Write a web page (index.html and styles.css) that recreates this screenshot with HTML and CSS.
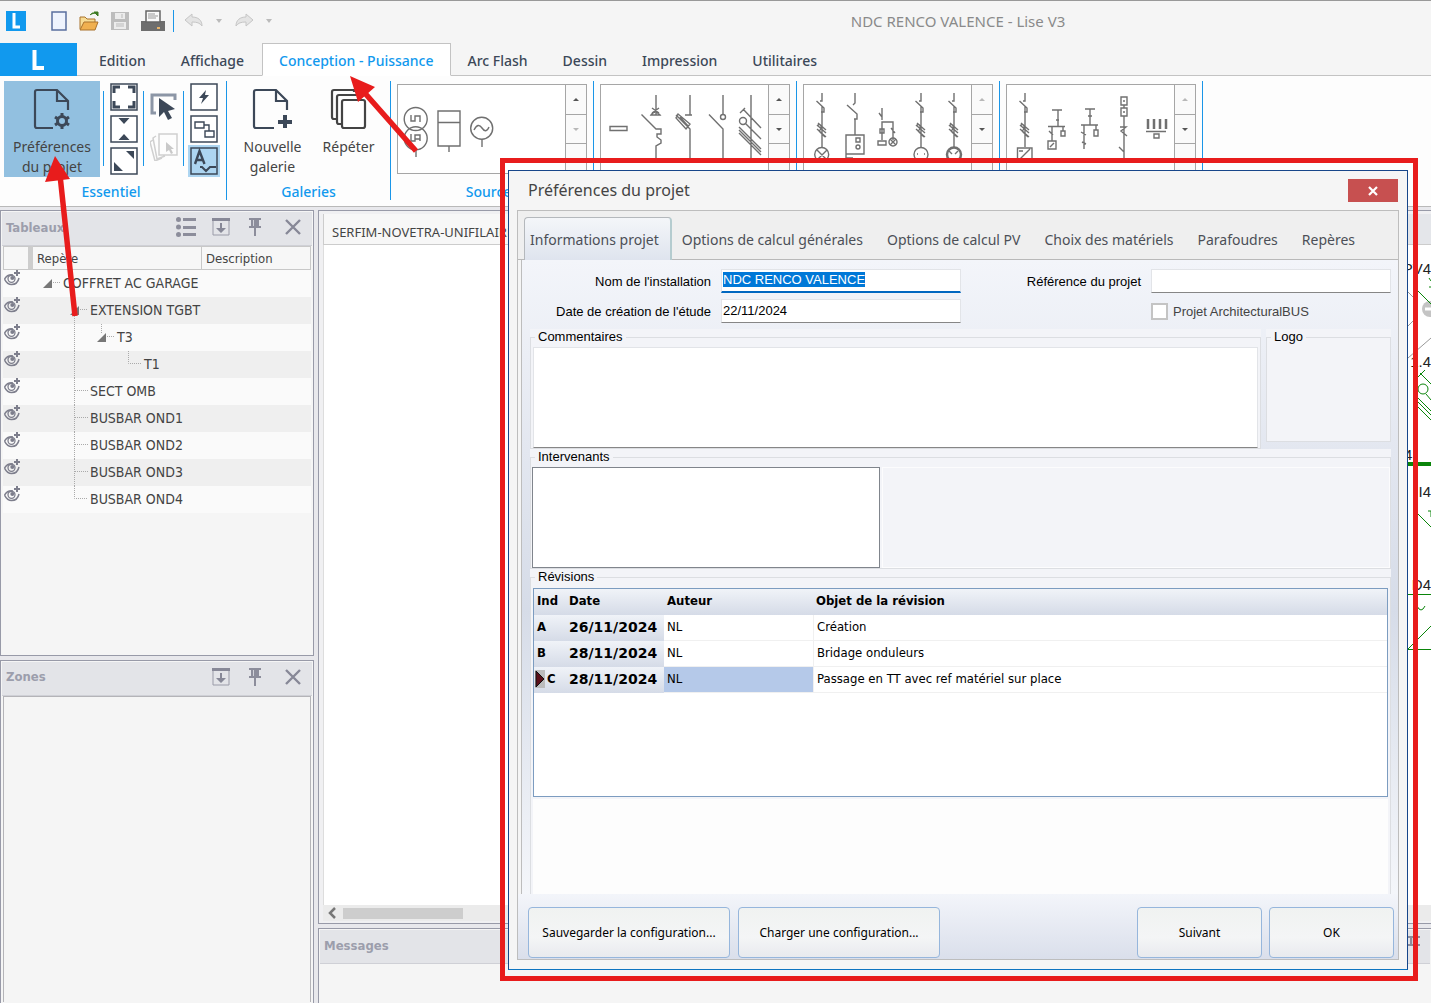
FILE: index.html
```html
<!DOCTYPE html>
<html lang="fr">
<head>
<meta charset="utf-8">
<title>NDC RENCO VALENCE - Lise V3</title>
<link rel="stylesheet" href="styles.css">
</head>
<body>
<svg class="defs" aria-hidden="true">
  <defs>
    <symbol id="ic-dock" viewBox="0 0 18 18"><path d="M1 1h16v16H1z" fill="none" stroke="#9a9ba8"/><path d="M0 0h18v3H0zM8 5h2v5h4l-5 5-5-5h4z" fill="#878897"/></symbol>
    <symbol id="ic-pin" viewBox="0 0 12 18"><path d="M0 0h12v2h-2v6h2v2H7v8H5v-8H0V8h2V2H0z" fill="#8c8d9b"/><path d="M4 2h1v6H4z" fill="#d0d1d8"/></symbol>
    <symbol id="ic-x" viewBox="0 0 18 18"><path d="M2 2l14 14M16 2L2 16" stroke="#878897" stroke-width="2.400" fill="none"/></symbol>
    <symbol id="ic-list" viewBox="0 0 20 20"><g fill="#8c8d9b"><circle cx="2.500" cy="2.500" r="2.500"/><circle cx="2.500" cy="10" r="2.500"/><circle cx="2.500" cy="17.500" r="2.500"/><path d="M7 1h13v3H7zM7 9h13v3H7zM7 16h13v3H7z"/></g></symbol>
    <symbol id="ic-eye" viewBox="0 0 16 16"><path d="M.5 9C3 5 6 4.500 9 5M.5 9c2 4 4 5.500 7 5.500S14 12.500 15 8" fill="none" stroke="#7d7e8c" stroke-width="1.500"/><circle cx="7.500" cy="8.800" r="3.500" fill="none" stroke="#7d7e8c" stroke-width="1.300"/><circle cx="8.300" cy="8" r="2" fill="#7d7e8c"/><path d="M12 0h2v2h2v2h-2v2h-2V4h-2V2h2z" fill="#7d7e8c"/></symbol>
    <symbol id="ic-feed" viewBox="-8 93 16 56" overflow="visible"><path d="M0 93v8h-2M-5.500 101l7.500 7v4H-1M0 106v41M-5 125l9 8M-5 129l9 8M-4 123l8 7M-5 126q3-3 4 0t-2 5M-3 131l6 6" fill="none" stroke="#707070" stroke-width="1.400"/></symbol>
  </defs>
</svg>

<div class="app">
  <header class="titlebar">
    <svg class="applogo" viewBox="0 0 20 20"><path d="M0 0h20v20H0z" fill="#1199ee"/><path d="M8 2v14h6" fill="none" stroke="#fff" stroke-width="3"/></svg>
    <div class="quick">
      <button type="button" aria-label="Nouveau"><svg width="16" height="20" viewBox="0 0 16 20"><path d="M1 1h14v18H1z" fill="#eef3fd" stroke="#5a6f9f" stroke-width="1.500"/></svg></button>
      <button type="button" aria-label="Ouvrir"><svg width="20" height="20" viewBox="0 0 20 20"><path d="M1 18V6h5l2 2h8v3" fill="#f7dc95" stroke="#a9722c"/><path d="M1 19l4-8h14l-3 8z" fill="#f0b050" stroke="#a9722c"/><path d="M11 4q2-3 6-2M15 1h4v4z" fill="#3d7a22" stroke="#3d7a22"/></svg></button>
      <button type="button" aria-label="Enregistrer" disabled><svg width="18" height="18" viewBox="0 0 18 18"><path d="M0 0h18v18H0z" fill="#bdbdbd"/><path d="M4 1h10v6H4zM3 10h12v7H3z" fill="#ececec"/><path d="M5 12h8M5 14h8M11 2v4" stroke="#bbb"/></svg></button>
      <button type="button" aria-label="Imprimer"><svg width="24" height="22" viewBox="0 0 24 22"><path d="M0 11h24v10H0z" fill="#6e6e6e"/><path d="M5 1h14v11H5z" fill="#fafafa" stroke="#666" stroke-width="1.500"/><path d="M7 4h7M7 6h10M7 8h8" stroke="#999"/><path d="M16 17h3v2h-3z" fill="#e7b36a"/></svg></button>
      <span class="bluebar"></span>
      <button type="button" aria-label="Annuler" disabled><svg width="20" height="16" viewBox="0 0 20 16"><path d="M1 7l7-6v3c6 0 10 3 10 9-2-3-5-4-10-4v4z" fill="#e4e4e4" stroke="#c6c6c6"/></svg></button>
      <span class="drop"></span>
      <button type="button" aria-label="Rétablir" disabled><svg width="20" height="16" viewBox="0 0 20 16"><path d="M19 7l-7-6v3C6 4 2 7 2 13c2-3 5-4 10-4v4z" fill="#e4e4e4" stroke="#c6c6c6"/></svg></button>
      <span class="drop"></span>
    </div>
    <h1>NDC RENCO VALENCE - Lise V3</h1>
  </header>

  <nav class="tabs">
    <a class="home" href="#" aria-label="Menu Lise"><svg width="14" height="22" viewBox="0 0 14 22"><path d="M2.500 0v18H12" fill="none" stroke="#fff" stroke-width="4"/></svg></a>
    <a href="#">Edition</a>
    <a href="#">Affichage</a>
    <a href="#" class="on">Conception - Puissance</a>
    <a href="#">Arc Flash</a>
    <a href="#">Dessin</a>
    <a href="#">Impression</a>
    <a href="#">Utilitaires</a>
    <span class="rest"></span>
  </nav>

  <section class="ribbon">
    <div class="group essential">
      <div class="tools">
        <button type="button" class="big pressed"><svg width="38" height="44" viewBox="0 0 38 44"><path d="M20 41H4q-2 0-2-2V5q0-2 2-2h20l11 11v9M24 3v11h11" fill="none" stroke="#3c4858" stroke-width="2.200"/><circle cx="29" cy="34" r="4.500" fill="none" stroke="#3c4858" stroke-width="3"/><path d="M29 26v3M29 39v3M22 30l3 2M33 36l3 2M22 38l3-2M33 32l3-2" stroke="#3c4858" stroke-width="3"/></svg><span>Préférences<br>du projet</span></button>
        <i class="short"></i>
        <div class="col">
          <button type="button" aria-label="Zoom étendu"><svg viewBox="0 0 28 28"><path d="M1 1h26v26H1z" fill="#fff" stroke="#3c4858" stroke-width="1.500"/><path d="M4 10V4h6M18 4h6v6M24 18v6h-6M10 24H4v-6" fill="none" stroke="#3c4858" stroke-width="3"/></svg></button>
          <button type="button" aria-label="Réduire"><svg viewBox="0 0 28 28"><path d="M1 1h26v26H1z" fill="#fff" stroke="#3c4858" stroke-width="1.500"/><path d="M8.500 3h11L14 9zM8.500 25h11L14 19z" fill="#3c4858"/></svg></button>
          <button type="button" aria-label="Agrandir"><svg viewBox="0 0 28 28"><path d="M1 1h26v26H1z" fill="#fff" stroke="#3c4858" stroke-width="1.500"/><path d="M16 4h8v8zM4 15v9h9z" fill="#3c4858"/></svg></button>
        </div>
        <i class="short"></i>
        <div class="col mid">
          <button type="button" aria-label="Sélection"><svg viewBox="0 0 28 28"><path d="M6 20H2V2h23v5" fill="none" stroke="#8c96a6" stroke-width="3"/><path d="M9 5v19l5-5 4 8 4-2-4-7 7-2z" fill="#3c4858"/></svg></button>
          <button type="button" aria-label="Sélection multiple" disabled><svg viewBox="0 0 28 28"><path d="M9 1h18v21H9zM6 3L3 5l4 21 8-3M3 7L0 9l5 19 7-3" fill="none" stroke="#d0d0d0" stroke-width="1.500"/><path d="M16 9v10l3-2 2 4 2-1-2-4h3z" fill="#c9c9c9"/></svg></button>
        </div>
        <i class="short"></i>
        <div class="col">
          <button type="button" aria-label="Calcul"><svg viewBox="0 0 28 28"><path d="M1 1h26v26H1z" fill="#fff" stroke="#3c4858" stroke-width="1.500"/><path d="M16 7l-7 8h4l-2 6 8-9h-4z" fill="#3c4858"/></svg></button>
          <button type="button" aria-label="Liaisons"><svg viewBox="0 0 28 28"><path d="M1 1h26v26H1z" fill="#fff" stroke="#3c4858" stroke-width="1.500"/><path d="M5 7h9v6H5zM14 10h5v6M15 16h9v6h-9z" fill="none" stroke="#3c4858" stroke-width="1.400"/></svg></button>
          <button type="button" class="lit" aria-label="Annotation"><svg viewBox="0 0 28 28"><path d="M1 1h26v26H1z" fill="none" stroke="#3c4858" stroke-width="1.500"/><path d="M5 17L9.500 4l5 13M6.500 13h6" fill="none" stroke="#3c4858" stroke-width="2.400"/><path d="M10 20h2l4 4 4-4h6" fill="none" stroke="#3c4858" stroke-width="2"/></svg></button>
        </div>
      </div>
      <h2>Essentiel</h2>
    </div>

    <div class="group gals">
      <div class="tools">
        <button type="button" class="big"><svg width="42" height="44" viewBox="0 0 42 44"><path d="M22 41H4q-2 0-2-2V5q0-2 2-2h20l11 11v9M24 3v11h11" fill="none" stroke="#3c4858" stroke-width="2.200"/><path d="M33 28v13M26 35h14" stroke="#3c4858" stroke-width="4"/></svg><span>Nouvelle<br>galerie</span></button>
        <button type="button" class="big"><svg width="38" height="44" viewBox="0 0 38 44"><path d="M6 32H4q-2 0-2-2V5q0-2 2-2h20v2M11 37H9q-2 0-2-2V10q0-2 2-2h20v2" fill="none" stroke="#444" stroke-width="2.200"/><rect x="12" y="13" width="23" height="28" rx="2" fill="#fff" stroke="#444" stroke-width="2.200"/></svg><span>Répéter</span></button>
      </div>
      <h2>Galeries</h2>
    </div>

    <div class="group gallery">
      <div class="box">
        <svg viewBox="398 85 167 88"><g class="ln"><circle cx="415.700" cy="119" r="11.500"/><circle cx="415.700" cy="138.300" r="11.500"/><path d="M416 150v7M411 115v6h4v-5h5v6M411 134v7h4v-6h5v6M415 139h5M438 111h22v35h-22zM438 122.500h22M449 146v6M482 139v8"/><circle cx="481.700" cy="128.300" r="11"/><path d="M474 130q4-8 8-2t7-1"/></g></svg>
        <div class="spin"><span class="up"></span><span class="down dim"></span><span class="more"></span></div>
      </div>
      <h2>Sources</h2>
    </div>
    <div class="group gallery">
      <div class="box">
        <svg viewBox="601 85 167 88"><g class="ln"><path d="M610 126.500h17v4h-17zM656 95v20M652 108l7 5M659 108l-7 5M651 115q4-6 9 0zM641.500 114.500L656 129h5v5h-4v3l4 3v3l-5 3v16M690 95v20M685 115h7M676 115l14 14v33M678 114l12 10-4 5-10-11zM680 117l8 9M723 95v20M709 114.500L723 129v33M751 95v67M743 109l18 19M740 113l5-5M745 123l16 16M739 127l22 22M739 130l22 22M739 133l22 22"/><circle cx="723" cy="117" r="2.500"/><circle cx="743" cy="121" r="3.500"/></g></svg>
        <div class="spin"><span class="up"></span><span class="down"></span><span class="more"></span></div>
      </div>
    </div>
    <div class="group gallery">
      <div class="box">
        <svg viewBox="804 85 167 88"><use href="#ic-feed" x="814" y="93" width="16" height="56"/><use href="#ic-feed" x="913" y="93" width="16" height="56"/><use href="#ic-feed" x="946" y="93" width="16" height="56"/><g class="ln"><circle cx="821.700" cy="154.500" r="7"/><path d="M817 150l10 10M827 150l-10 10M855 93v10l-2 2M847 105l10 9v5h-3M855 119v16M846 135h18v19h-18zM856 138h4v4h-4zM846 154v4h7M882 108v12M879 113l3 4M882 140v-18h11v18M878 141h8v4h-8zM880 129h4v4h-4zM891 128l4 5M890 139l6 6M896 139l-6 6M917 154h1M924 154h1M949 151l3 3M958 151l-3 3M950 159h2M956 159h2"/><circle cx="858" cy="147" r="2"/><circle cx="893" cy="142" r="4"/><circle cx="921" cy="154.500" r="7"/><circle cx="954" cy="154.500" r="7" stroke-width="2.500"/></g></svg>
        <div class="spin"><span class="up dim"></span><span class="down"></span><span class="more"></span></div>
      </div>
    </div>
    <div class="group gallery">
      <div class="box">
        <svg viewBox="1007 85 167 88"><use href="#ic-feed" x="1017" y="93" width="16" height="56"/><g class="ln"><path d="M1017.500 148h14.500v14h-14.500zM1020 159l10-10M1019 151h4M1052 110h10M1058 110v16M1056 120h3M1048 126.500h17M1052 126v15M1049 131l4 4M1048 141h8v8h-8zM1050 147l4-4M1063 126v5M1061 131h4v5h-4zM1085 109h10M1090 109v16M1088 116h4M1081 125h17M1084 125v24M1081 132l5 3M1082 142l4 2M1096 125v5M1094 130h4v6h-4zM1121 97h6v8h-6zM1121 108h6v8h-6zM1124 105v3M1124 116v46M1120 127h6l-5 4 6 5M1119 147l5 5M1123 101h2M1123 112h2M1146 131.500h20M1154 134h5v4h-5z"/><path d="M1148 119v10M1154 119v10M1160 119v10M1166 119v10" stroke-width="2.500"/></g></svg>
        <div class="spin"><span class="up dim"></span><span class="down"></span><span class="more"></span></div>
      </div>
    </div>
  </section>

  <main class="work">
    <aside class="dock">
      <section class="panel boards">
        <header><h3>Tableaux</h3><svg width="20" height="20"><use href="#ic-list"/></svg><svg width="18" height="18"><use href="#ic-dock"/></svg><svg width="12" height="18"><use href="#ic-pin"/></svg><svg width="18" height="18"><use href="#ic-x"/></svg></header>
        <table class="tree">
          <thead><tr><th class="c1"></th><th class="c2">Repère</th><th>Description</th></tr></thead>
          <tbody>
            <tr><td><svg width="16" height="16"><use href="#ic-eye"/></svg></td><td><span><svg width="30" height="27" viewBox="33 0 30 27"><path d="M52 9v9h-9z" fill="#777"/><path class="dot" d="M53 12.500h8"/></svg>COFFRET AC GARAGE</span></td><td></td></tr>
            <tr><td><svg width="16" height="16"><use href="#ic-eye"/></svg></td><td><span><svg width="57" height="27" viewBox="33 0 57 27"><path d="M79 9v9h-9z" fill="#777"/><path class="dot" d="M80 12.500h8M74.500 17v10"/></svg>EXTENSION TGBT</span></td><td></td></tr>
            <tr><td><svg width="16" height="16"><use href="#ic-eye"/></svg></td><td><span><svg width="84" height="27" viewBox="33 0 84 27"><path d="M106 9v9h-9z" fill="#777"/><path class="dot" d="M107 12.500h8M101.500 0v9M74.500 0v27"/></svg>T3</span></td><td></td></tr>
            <tr><td><svg width="16" height="16"><use href="#ic-eye"/></svg></td><td><span><svg width="111" height="27" viewBox="33 0 111 27"><path class="dot" d="M128.500 0v12.500h13M74.500 0v27"/></svg>T1</span></td><td></td></tr>
            <tr><td><svg width="16" height="16"><use href="#ic-eye"/></svg></td><td><span><svg width="57" height="27" viewBox="33 0 57 27"><path class="dot" d="M74.500 0v27M75 12.500h13"/></svg>SECT OMB</span></td><td></td></tr>
            <tr><td><svg width="16" height="16"><use href="#ic-eye"/></svg></td><td><span><svg width="57" height="27" viewBox="33 0 57 27"><path class="dot" d="M74.500 0v27M75 12.500h13"/></svg>BUSBAR OND1</span></td><td></td></tr>
            <tr><td><svg width="16" height="16"><use href="#ic-eye"/></svg></td><td><span><svg width="57" height="27" viewBox="33 0 57 27"><path class="dot" d="M74.500 0v27M75 12.500h13"/></svg>BUSBAR OND2</span></td><td></td></tr>
            <tr><td><svg width="16" height="16"><use href="#ic-eye"/></svg></td><td><span><svg width="57" height="27" viewBox="33 0 57 27"><path class="dot" d="M74.500 0v27M75 12.500h13"/></svg>BUSBAR OND3</span></td><td></td></tr>
            <tr><td><svg width="16" height="16"><use href="#ic-eye"/></svg></td><td><span><svg width="57" height="27" viewBox="33 0 57 27"><path class="dot" d="M74.500 0v12.500h13"/></svg>BUSBAR OND4</span></td><td></td></tr>
          </tbody>
        </table>
      </section>
      <section class="panel zones">
        <header><h3>Zones</h3><svg width="18" height="18"><use href="#ic-dock"/></svg><svg width="12" height="18"><use href="#ic-pin"/></svg><svg width="18" height="18"><use href="#ic-x"/></svg></header>
        <div class="empty"></div>
      </section>
    </aside>
    <div class="center">
      <section class="doc">
        <div class="doctab"><span>SERFIM-NOVETRA-UNIFILAIRE</span></div>
        <div class="sheet">
          <svg width="30" height="440" viewBox="1401 245 30 440"><g font-family="Liberation Sans, sans-serif" font-size="15" fill="#222"><text x="1431" y="274" text-anchor="end">PV4</text><text x="1431" y="367" text-anchor="end">1.4</text><text x="1404" y="460">4</text><text x="1431" y="497" text-anchor="end">I4</text><text x="1431" y="590" text-anchor="end">D4</text></g><circle cx="1430" cy="309" r="8" fill="#c4c4c4"/><path d="M1425 309h6" stroke="#fff" stroke-width="3"/><path d="M1408 292l6 6M1408 326l6-6M1408 358l23-20" fill="none" stroke="#999"/><g fill="none" stroke="#0a850a"><path d="M1417 290l14 14M1429 278l2 3M1429 287h2M1417 378l8-8M1420 373l11 11M1426 394l5 6M1417 397l14 14M1417 401l14 14M1417 406l14 14M1417 513l14 14M1428 511h3v6M1408 594.500h23M1417 606q4 8 8 0M1408 649l23-23M1408 649.500h23"/><circle cx="1423" cy="389" r="5"/><path d="M1408 464h23" stroke-width="4"/></g></svg>
        </div>
        <div class="hbar"><svg width="10" height="12" viewBox="0 0 10 12"><path d="M8 1L3 6l5 5" fill="none" stroke="#777" stroke-width="2.500"/></svg><span></span></div>
      </section>
      <section class="panel messages"><header><h3>Messages</h3><svg width="12" height="18"><use href="#ic-pin"/></svg></header></section>
    </div>
  </main>

  <div class="frame">
    <form class="dialog" role="dialog" aria-labelledby="dlg">
      <header><h2 id="dlg">Préférences du projet</h2><button type="button" class="close" aria-label="Fermer"><svg width="12" height="10" viewBox="0 0 12 10"><path d="M2 1l8 8M10 1L2 9" stroke="#fff" stroke-width="2.200"/></svg></button></header>
      <div class="inner">
        <nav class="dtabs"><a href="#" class="on">Informations projet</a><a href="#">Options de calcul générales</a><a href="#">Options de calcul PV</a><a href="#">Choix des matériels</a><a href="#">Parafoudres</a><a href="#">Repères</a></nav>
        <div class="page">
          <div class="fields">
            <label for="nom">Nom de l'installation</label><input id="nom" type="text" value="NDC RENCO VALENCE" autofocus>
            <label for="ref">Référence du projet</label><input id="ref" type="text">
            <label for="date">Date de création de l'étude</label><input id="date" type="text" value="22/11/2024">
            <span class="check"><input id="bus" type="checkbox"><label for="bus">Projet ArchitecturalBUS</label></span>
          </div>
          <div class="two">
            <div class="gb notes"><label for="com">Commentaires</label><textarea id="com"></textarea></div>
            <div class="gb logo"><span>Logo</span></div>
          </div>
          <div class="gb people"><label for="int">Intervenants</label><div><textarea id="int"></textarea><span></span></div></div>
          <div class="gb revs"><span>Révisions</span>
            <div class="grid">
              <table>
                <thead><tr><th class="i">Ind</th><th class="d">Date</th><th class="a">Auteur</th><th>Objet de la révision</th></tr></thead>
                <tbody>
                  <tr><th>A</th><th class="day">26/11/2024</th><td>NL</td><td>Création</td></tr>
                  <tr><th>B</th><th class="day">28/11/2024</th><td>NL</td><td>Bridage onduleurs</td></tr>
                  <tr><th class="cur"><svg width="10" height="18" viewBox="0 0 10 18"><path d="M0 0h10v18H0z" fill="#bcbcbc"/><path d="M1 1l8 8-8 8z" fill="#5a0f18" stroke="#111"/></svg>C</th><th class="day">28/11/2024</th><td class="sel">NL</td><td>Passage en TT avec ref matériel sur place</td></tr>
                </tbody>
              </table>
            </div>
            <div class="blank"></div>
          </div>
        </div>
        <footer><button type="button" class="wide">Sauvegarder la configuration...</button><button type="button" class="wide">Charger une configuration...</button><i></i><button type="button">Suivant</button><button type="submit">OK</button></footer>
      </div>
    </form>
  </div>
  <svg class="arrows" width="430" height="330" viewBox="0 0 430 330"><path d="M60 175L75 316M363 91l53 60" stroke="#e81c1c" stroke-width="5.500"/><path d="M55 156l15 23-25 3zM350 76l25 11-17 15z" fill="#e81c1c"/></svg>
</div>
<script src="page.js"></script>
</body>
</html>
```
FILE: styles.css
```css
* { box-sizing: border-box; }
html, body { height: 100%; margin: 0; }
body { font-family: "Noto Sans", sans-serif; font-size: 14px; color: #444; background: #f5f5f5; overflow: hidden; }
h1, h2, h3 { margin: 0; font-weight: normal; }
button { font: inherit; color: inherit; border: 0; padding: 0; background: none; }
a { color: inherit; text-decoration: none; }
svg { display: block; flex: none; }
.defs { position: absolute; width: 0; height: 0; }
.app { position: relative; height: 100%; display: flex; flex-direction: column; overflow: hidden; }

/* title bar */
.titlebar { flex: none; height: 43px; display: flex; align-items: center; border-top: 1px solid #999; padding: 0 0 3px 6px; }
.applogo { width: 20px; height: 20px; }
.quick { display: flex; align-items: center; gap: 12px; width: 248px; padding-left: 25px; }
.bluebar { width: 1px; height: 22px; background: #1a96e8; margin: 0 -2px 0 -4px; }
.drop { border: 3px solid transparent; border-top: 4px solid #bbb; border-bottom: 0; }
.titlebar h1 { flex: 1; text-align: center; font-size: 15px; color: #8a8a8a; margin-left: 211px; }

/* ribbon tabs */
.tabs { flex: none; height: 33px; display: flex; color: #3c4858; font-weight: 500; }
.tabs a { border-bottom: 1px solid #c3c3c3; line-height: 35px; padding: 0 18px 0 17px; white-space: nowrap; }
.tabs .home { width: 77px; background: #1199ee; border: 0; padding: 7px 0 0 32px; }
.tabs .home + a { padding-left: 22px; }
.tabs .on { color: #1199ee; border: 1px solid #c3c3c3; border-bottom-color: #fff; background: #fff; line-height: 33px; padding: 0 16px; }
.tabs .rest { flex: 1; border-bottom: 1px solid #c3c3c3; }

/* ribbon */
.ribbon { flex: none; height: 131px; display: flex; background: #fdfdfd; border-bottom: 1px solid #b9b9b9; padding-top: 5px; }
.group { display: flex; flex-direction: column; border-right: 1px solid #1a96e8; height: 119px; }
.group h2 { font-size: 14px; color: #1199ee; text-align: center; line-height: 20px; font-weight: 500; margin-top: 5px; }
.tools { display: flex; height: 96px; align-items: flex-start; }
.essential { width: 227px; padding-left: 4px; }
.essential h2 { padding-right: 8px; }
.big { width: 96px; height: 96px; line-height: 20px; padding-top: 6px; display: flex; flex-direction: column; align-items: center; gap: 6px; white-space: nowrap; }
.pressed { background: #92c0e0; }
.short { width: 1px; height: 75px; background: #1a96e8; margin: 10px 3px 0; }
.col { display: flex; flex-direction: column; width: 32px; margin: 0 0 0 1px; }
.col button { width: 32px; height: 32px; padding: 2px; }
.mid { gap: 8px; padding-top: 10px; }
.lit { background: #add5f1; }
.gals { width: 164px; }
.gals .big { width: 61px; }
.gals .big:first-child { width: 91px; }
.gallery { width: 203px; padding: 3px 6px 0; }
.box { display: flex; width: 190px; height: 90px; border: 1px solid #a6a6a6; background: #fff; }
.box > svg { width: 167px; height: 88px; }
.gallery h2 { margin-top: 8px; }
.ln { fill: none; stroke: #707070; stroke-width: 1.4px; }
.spin { flex: 1; display: flex; flex-direction: column; border-left: 1px solid #a6a6a6; background: #fafafa; }
.spin span { flex: 1; display: grid; place-items: center; }
.spin span + span { border-top: 1px solid #a6a6a6; }
.spin span::before { content: ""; border: 3px solid transparent; }
.spin .up::before { border-top: 0; border-bottom: 3px solid #555; }
.spin .down::before { border-bottom: 0; border-top: 3px solid #555; }
.spin .dim::before { opacity: .4; }
.spin .more::before { border: 0; width: 5px; height: 2px; background: #777; }

/* docked panels */
.work { flex: 1; min-height: 0; display: flex; gap: 4px; padding-top: 3px; background: #e8e8ec; }
.dock { width: 314px; flex: none; display: flex; flex-direction: column; gap: 4px; font-family: "DejaVu Sans Condensed", "DejaVu Sans", sans-serif; font-stretch: condensed; }
.panel { border: 1px solid #989aa8; background: #f5f5f5; padding: 1px 2px; }
.panel header { height: 34px; display: flex; align-items: center; background: #e3e4e8; border-bottom: 1px solid #cfd0d6; margin: 0 -1px; padding: 0 10px 3px 4px; }
.panel h3 { flex: 1; font: bold 13px "DejaVu Sans Condensed", "DejaVu Sans", sans-serif; font-stretch: condensed; color: #9c9eac; }
.panel header svg + svg { margin-left: 19px; }
.panel header svg:nth-last-child(3) { margin-left: 16px; }
.panel header svg:nth-last-child(2) { margin-right: 4px; }
.boards { flex: 565; }
.zones { flex: 435; border-bottom: 0; display: flex; flex-direction: column; }
.zones .empty { flex: 1; border: 1px solid #b4b4b8; border-bottom: 0; }
.tree { border-collapse: separate; border-spacing: 0; table-layout: fixed; width: 308px; font-size: 14px; }
.tree th { height: 24px; border: 1px solid #c8c8c8; border-left-width: 0; font-size: 13px; font-weight: normal; text-align: left; padding: 0 4px; background: #f7f7f7; }
.tree .c1 { width: 30px; border-left-width: 1px; border-right: 5px solid #cdcdcd; }
.tree .c2 { width: 169px; }
.tree td { padding: 0; height: 27px; vertical-align: top; white-space: nowrap; }
.tree td:first-child { padding-left: 1px; }
.tree td span { display: flex; height: 27px; line-height: 27px; }
.tree tbody tr { background: #fafafa; }
.tree tbody tr:nth-child(even) { background: #efefef; }
.dot { fill: none; stroke: #aaa; stroke-dasharray: 1 1; }
.center { flex: 1; min-width: 0; display: flex; flex-direction: column; gap: 4px; }
.doc { flex: 1; border: 1px solid #989aa8; border-right: 0; padding: 3px 0 2px 4px; display: flex; flex-direction: column; background: #f0f0f2; }
.doctab { height: 31px; background: #e4e6ea; display: flex; border-bottom: 1px solid #ccc; }
.doctab span { background: #f7f7f7; padding: 0 10px 0 8px; border-left: 1px solid #ccc; font: 13px/36px "Noto Sans", sans-serif; }
.sheet { flex: 1; min-height: 0; background: #fff; display: flex; justify-content: flex-end; border-left: 1px solid #ddd; overflow: hidden; }
.hbar { height: 16px; flex: none; background: #ebebeb; display: flex; align-items: center; gap: 6px; padding-left: 4px; }
.hbar span { width: 120px; height: 11px; background: #cdcdcd; }
.messages { height: 75px; border-right: 0; border-bottom: 0; }

/* dialog and its highlight frame */
.frame { position: absolute; left: 500px; right: 13px; top: 158px; bottom: 22px; border: 5px solid #e81c1c; padding: 7px 5px 6px 3px; display: flex; }
.dialog { flex: 1; min-width: 0; display: flex; flex-direction: column; background: #f5f5f5; border: 1px solid #17468a; border-bottom-color: #0e74c0; padding: 0 8px 9px; color: #000; }
.dialog > header { height: 39px; flex: none; display: flex; justify-content: space-between; align-items: center; padding: 0 1px 0 11px; }
.dialog h2 { font-size: 16px; line-height: 18px; padding-bottom: 2px; color: #444; }
.close { width: 50px; height: 23px; background: #c75050; display: grid; place-items: center; }
.inner { flex: 1; min-height: 0; display: flex; flex-direction: column; border: 1px solid #bdbdbd; }
.dtabs { height: 49px; flex: none; display: flex; align-items: flex-end; background: #efefef; border-bottom: 1px solid #b9b9b9; padding-left: 6px; color: #4c4f57; }
.dtabs a { line-height: 38px; padding: 0 12px; white-space: nowrap; }
.dtabs .on { height: 43px; line-height: 43px; margin-bottom: -1px; padding: 0 11px 0 5px; border: 1px solid #b4b8bc; border-right: 2px solid #b5cccf; border-bottom: 0; border-radius: 4px 4px 0 0; background: linear-gradient(#f4f6f9, #dfe4ee); }
.dtabs .on + a { padding-left: 10px; }
.page { flex: 1; min-height: 0; margin: 0 0 0 3px; border-left: 1px solid #bdbdbd; padding: 9px 7px 0 8px; background: linear-gradient(#f3f5fa, #e3e7f0 30%, #d6dce8 55%, #f4f6fa); display: flex; flex-direction: column; font: 13px "Liberation Sans", Arial, sans-serif; }
.fields { flex: none; display: grid; grid-template-columns: 181px 240px 1fr 240px; column-gap: 10px; grid-auto-rows: 24px; row-gap: 6px; align-items: center; padding-bottom: 6px; }
.fields > label { text-align: right; }
.fields input[type=text] { height: 24px; width: 100%; border: 1px solid #e2e4e8; border-bottom-color: #868686; background: #fff; font: 13px "Liberation Sans", Arial, sans-serif; padding: 0 2px 2px 1px; outline: 0; }
.fields input[type=text]:focus { border-bottom: 2px solid #0067c0; }
::selection { background: #0078d7; color: #fff; }
.check { grid-column: 4; display: flex; align-items: center; gap: 5px; color: #444; }
.check input { appearance: none; width: 17px; height: 17px; margin: 0; border: 2px solid #c4c4c4; background: #fff; }
.gb { background: #f3f4f8; border: 1px solid #dcdee2; box-shadow: 0 -8px 0 #f3f4f8; display: flex; flex-direction: column; }
.gb > label, .gb > span { line-height: 16px; margin: -9px auto 0 4px; padding: 0 3px; background: #f3f4f8; }
textarea { display: block; resize: none; border: 1px solid #e2e4e8; background: #fff; font: inherit; padding: 2px; }
.two { flex: none; display: flex; gap: 5px; height: 120px; padding-top: 8px; align-items: flex-start; }
.notes { flex: 1; height: 112px; }
.notes textarea { flex: 1; margin: 2px; margin-bottom: 0; border-bottom-color: #868686; }
.logo { width: 125px; height: 105px; }
.people { flex: none; height: 112px; margin-top: 8px; }
.people > div { flex: 1; display: flex; gap: 2px; padding: 2px 0 0 1px; }
.people textarea { width: 348px; border-color: #80858c; }
.people div > span { flex: 1; border: 1px solid #fcfcfd; }
.revs { flex: 1; margin-top: 8px; min-height: 0; border-bottom: 0; padding: 0 2px; }
.revs > span { margin-left: 2px; }
.grid { height: 209px; flex: none; border: 1px solid #7c9cc0; background: #fff; margin-top: 3px; font: 13px "DejaVu Sans Condensed", "DejaVu Sans", sans-serif; font-stretch: condensed; }
.grid table { width: 100%; border-collapse: separate; border-spacing: 0; table-layout: fixed; }
.grid th, .grid td { height: 26px; padding: 0 3px 2px; line-height: 18px; text-align: left; white-space: nowrap; }
.grid th { background: linear-gradient(#f0f3f8, #d5dbe7); }
.grid td { border-bottom: 1px solid #f0f0f0; }
.grid td + td { border-left: 1px solid #f0f0f0; }
.grid .sel { background: #b5c9e9; }
.i { width: 31px; } .d { width: 99px; } .a { width: 149px; }
.grid .d, .grid .day { padding-left: 4px; }
.grid .day { font-family: "DejaVu Sans", sans-serif; font-stretch: normal; font-size: 14px; }
.grid .cur { padding-left: 1px; }
.cur svg { display: inline-block; vertical-align: middle; margin-right: 2px; }
.blank { flex: 1; margin-top: 2px; background: #fdfdfd; }
.dialog footer { flex: none; height: 65px; display: flex; gap: 7px; padding: 13px 4px 1px 10px; background: linear-gradient(#f3f5fa, #dadfeb); font-size: 12px; }
.dialog footer i { flex: 1; }
.dialog footer button { width: 125px; border: 1px solid #96b6dc; border-radius: 4px; background: linear-gradient(#f0f2f1, #f4f5f6 60%, #e8eaee); }
.dialog footer .wide { width: 202px; margin-right: 1px; }

.arrows { position: absolute; left: 0; top: 0; pointer-events: none; }
```
FILE: page.js
```javascript
document.getElementById("nom").select();
```
